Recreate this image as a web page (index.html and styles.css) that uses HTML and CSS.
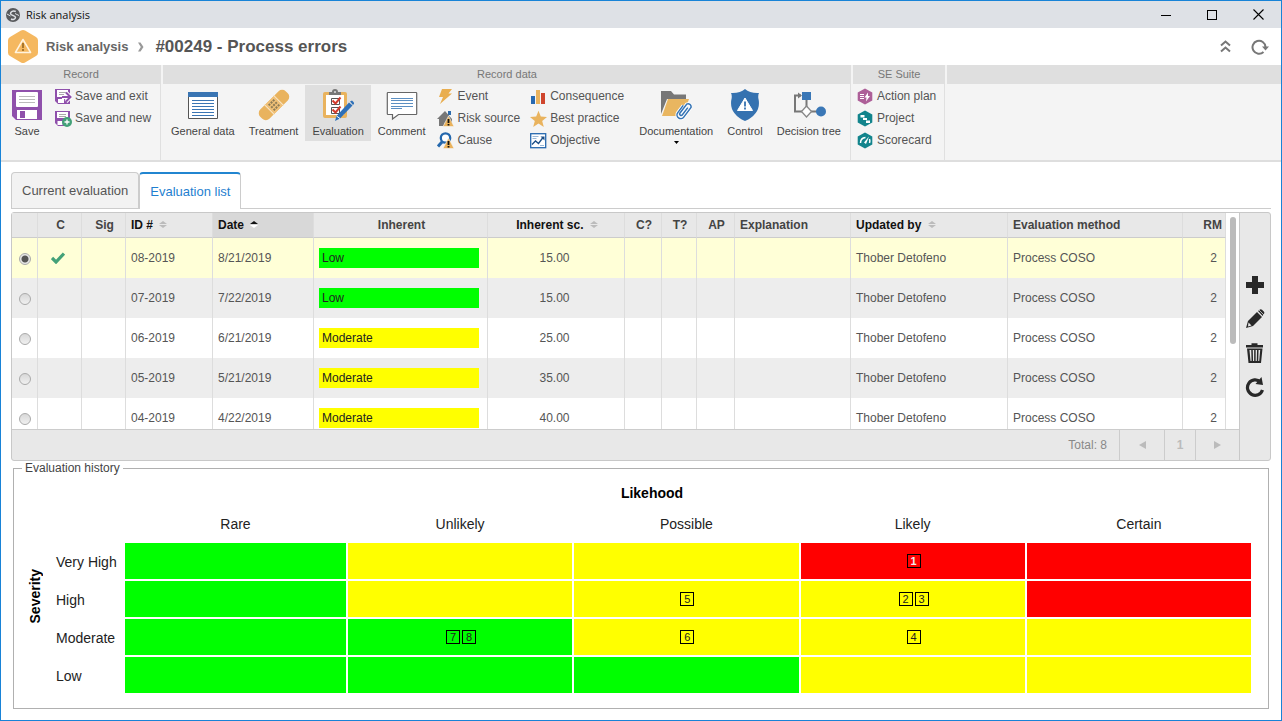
FILE: index.html
```html
<!DOCTYPE html>
<html lang="en">
<head>
<meta charset="utf-8">
<title>Risk analysis</title>
<link rel="stylesheet" href="styles.css">
</head>
<body>
<div class="window">
  <header class="titlebar">
    <svg class="app-icon" width="14" height="14" viewBox="0 0 14 14"><circle cx="7" cy="7" r="7" fill="#57595c"/><path d="M9.800 3.500C7 2 4.500 4 4.500 5.500 4.500 8 9.500 7 9.500 9.500 9.300 11 7 12 5 11" fill="none" stroke="#dee1e6" stroke-width="1.500"/><path d="M1 6l3.500 2M9 5.500l4 2" stroke="#dee1e6" stroke-width="1"/></svg>
    <span class="titlebar-text">Risk analysis</span>
    <button class="win-btn" type="button" aria-label="Minimize"><svg width="10" height="11"><path d="M0 6.500h10" stroke="#000"/></svg></button>
    <button class="win-btn" type="button" aria-label="Maximize"><svg width="10" height="10"><rect x=".5" y=".5" width="9" height="9" fill="none" stroke="#000"/></svg></button>
    <button class="win-btn" type="button" aria-label="Close"><svg width="11" height="11"><path d="M.5.5l10 10M10.500.5l-10 10" stroke="#000" stroke-width="1.100"/></svg></button>
  </header>

  <div class="heading">
    <svg width="30" height="33" viewBox="0 0 30 33"><path d="M13 .6q2-1.100 4 0l11 6.300q2 1.200 2 3.400v12.400q0 2.200-2 3.400l-11 6.300q-2 1.100-4 0l-11-6.300q-2-1.200-2-3.400V10.300q0-2.200 2-3.400z" fill="#f5b860"/><path d="M15 9.500l7.600 13H7.400z" fill="none" stroke="#fff3df" stroke-width="1.500" stroke-linejoin="round"/><path d="M15 13v5M15 19v2" stroke="#a8762c" stroke-width="2"/></svg>
    <a class="crumb" href="#">Risk analysis</a>
    <svg class="crumb-sep" width="6" height="10" viewBox="0 0 6 10"><path d="M0 .5h2.500l3 4.500-3 4.500H0L2.800 5z" fill="#999"/></svg>
    <h1 class="record-title">#00249 - Process errors</h1>
    <button class="icon-btn collapse" type="button" aria-label="Collapse"><svg width="11" height="13" viewBox="0 0 11 13"><path d="M1 5.500l4.500-4 4.500 4M1 11.500l4.500-4 4.500 4" fill="none" stroke="#777" stroke-width="2"/></svg></button>
    <button class="icon-btn" type="button" aria-label="Refresh"><svg width="18" height="16" viewBox="0 0 18 16"><path d="M12.500 13A6.500 6.500 0 1 1 14.500 8" fill="none" stroke="#777" stroke-width="2"/><path d="M11 7.500h7l-3.500 4z" fill="#777"/></svg></button>
  </div>

  <nav class="ribbon">
    <section class="group">
      <h2 class="group-title">Record</h2>
      <div class="group-body group-record">
        <button class="big" type="button">
          <svg width="32" height="32" viewBox="0 0 32 32"><path d="M1 1h30v30H5l-4-4z" fill="#8f50ab"/><rect x="5" y="3" width="22" height="15" rx="1" fill="#fff"/><path d="M8 7.500h16M8 10.500h16M8 13.500h16" stroke="#bbb"/><rect x="6" y="21" width="20" height="9" fill="#fff"/><rect x="9" y="22" width="5" height="7" fill="#8f50ab"/></svg>
          Save</button>
        <div class="stack">
          <button class="small" type="button"><svg width="17" height="17" viewBox="0 0 17 17"><path d="M0 1h15v15H3l-3-3z" fill="#8f50ab"/><rect x="2" y="2" width="11" height="7" fill="#fff"/><path d="M4 4.500h7M4 6.500h5" stroke="#aaa"/><path d="M3 11h6v4H3z" fill="#fff"/><path d="M7 9h8M11 4.500L15.500 9 11 13.500" fill="none" stroke="#fff" stroke-width="4"/><path d="M7 9h8M11 4.500L15.500 9 11 13.500" fill="none" stroke="#8f50ab" stroke-width="2"/></svg>Save and exit</button>
          <button class="small" type="button"><svg width="17" height="17" viewBox="0 0 17 17"><path d="M0 1h15v15H3l-3-3z" fill="#8f50ab"/><rect x="2" y="2" width="11" height="6" fill="#fff"/><path d="M4 4.500h7M4 6.500h7" stroke="#aaa"/><path d="M2.500 11h5v4h-5z" fill="#fff"/><circle cx="12" cy="12" r="5" fill="#43a178"/><path d="M12 9.500v5M9.500 12h5" stroke="#fff" stroke-width="1.300"/></svg>Save and new</button>
        </div>
      </div>
    </section>

    <section class="group">
      <h2 class="group-title">Record data</h2>
      <div class="group-body group-data">
        <button class="big" type="button">
          <svg width="32" height="32" viewBox="0 0 32 32"><path d="M1.500 3.500h29v26h-29z" fill="#fff" stroke="#555"/><path d="M1 3h30v5H1z" fill="#3a75b3"/><path d="M5 11.500h22M5 14.500h22M5 17.500h22M5 20.500h22M5 23.500h22M5 26.500h22" stroke="#3a75b3" stroke-width="1.200"/></svg>
          General data</button>
        <button class="big" type="button">
          <svg width="32" height="32" viewBox="0 0 32 32"><g transform="rotate(-45 16 16)"><rect x="-2" y="9.500" width="36" height="13" rx="5" fill="#e9b35e"/><rect x="10" y="9.500" width="12" height="13" fill="#f0c077"/><path d="M9.500 9v14M22.500 9v14" stroke="#f8e6c8"/><path d="M12 12.500h8M12 16h8M12 19.500h8" stroke="#8f7c55" stroke-width="2" stroke-dasharray="2 1"/></g></svg>
          Treatment</button>
        <button class="big active" type="button">
          <svg width="32" height="32" viewBox="0 0 32 32"><rect x="1" y="3" width="24" height="26" rx="2" fill="#e9b35e"/><path d="M4 6h18v20H4z" fill="#fff"/><path d="M7 6V3h3q0-3 3-3t3 3h3v3z" fill="#777"/><circle cx="13" cy="3" r="1" fill="#ddd"/><path d="M9.500 9.500h8v6h-8zM9.500 18.500h8v6h-8z" fill="#fff" stroke="#555"/><path d="M10.500 11.500l3 3 5-6M10.500 20.500l3 3 5-6" fill="none" stroke="#d33a2c" stroke-width="2"/><path d="M14.500 27L27 13.500l3.500 3L18 29.500l-5 2.500z" fill="#2e70b8"/><path d="M28 12.500l2-1 2.500 2.500-1.500 2z" fill="#2e70b8"/><path d="M14.500 27l3.500 2.500" stroke="#fff"/></svg>
          Evaluation</button>
        <button class="big" type="button">
          <svg width="32" height="32" viewBox="0 0 32 32"><path d="M2 3.500h28q.7 0 .7.700v20.600q0 .7-.7.700H12.500l-6 4.500v-4.500H2q-.7 0-.7-.7V4.200q0-.7.700-.7z" fill="#fff" stroke="#666" stroke-width="1.200"/><path d="M5 9.500h22M5 11.500h22M5 14.500h22M5 17.500h22M5 19.500h11" stroke="#5b8fc2"/></svg>
          Comment</button>
        <div class="stack stack-a">
          <button class="small" type="button"><svg width="17" height="17" viewBox="0 0 17 17"><path d="M5 1h10l-3.500 4.500H15L3 16l3-7H2z" fill="#e9ae50"/></svg>Event</button>
          <button class="small" type="button"><svg width="17" height="17" viewBox="0 0 17 17"><path d="M11 1h3v4h-3z" fill="#2d6cad"/><path d="M8 1l7 8v6H8v-3l-1 4H2V9H0z" fill="#777"/><path d="M11.500 6l5.500 10.500H6z" fill="#eab25b" stroke="#f4f4f4" stroke-width=".6"/><path d="M11.500 9v4M11.500 14v1.500" stroke="#111" stroke-width="1.800"/></svg>Risk source</button>
          <button class="small" type="button"><svg width="17" height="17" viewBox="0 0 17 17"><circle cx="8.500" cy="6" r="4.700" fill="#fff" stroke="#2568ad" stroke-width="2.300"/><path d="M5 10l-4 4.500" stroke="#2568ad" stroke-width="3"/><path d="M11.500 6l5.500 10.500H6z" fill="#eab25b" stroke="#f4f4f4" stroke-width=".6"/><path d="M11.500 9v4M11.500 14v1.500" stroke="#111" stroke-width="1.800"/></svg>Cause</button>
        </div>
        <div class="stack stack-b">
          <button class="small" type="button"><svg width="17" height="17" viewBox="0 0 17 17"><path d="M1 8h4v8H1z" fill="#2869b0"/><path d="M6 2h4v14H6z" fill="#e9b35e"/><path d="M11 5h4v11h-4z" fill="#cf452d"/></svg>Consequence</button>
          <button class="small" type="button"><svg width="17" height="17" viewBox="0 0 17 17"><path d="M8.500.8l2.300 5.700 6.200.4-4.800 4 1.600 6-5.300-3.400L3.200 16.900l1.600-6L0 6.900l6.200-.4z" fill="#e9b35e"/></svg>Best practice</button>
          <button class="small" type="button"><svg width="17" height="17" viewBox="0 0 17 17"><rect x=".7" y="1.700" width="15" height="14" fill="#fff" stroke="#2668ae" stroke-width="1.300"/><path d="M2.500 4.500h6M2.500 6.500h4M10 13.500h4" stroke="#9bb8d6"/><path d="M2 12.500l3.500-3.500 3 2.500 4.500-6" fill="none" stroke="#1c4e86" stroke-width="1.300"/><path d="M10.500 4.500h4v4z" fill="#1c4e86"/></svg>Objective</button>
        </div>
        <button class="big" type="button">
          <svg width="32" height="32" viewBox="0 0 32 32"><path d="M1 2h10l3 3.500h12V10H7L1 25z" fill="#777"/><path d="M8 10h21l-6 17H2z" fill="#e9b660"/><g transform="rotate(37 24 22)" fill="none"><path d="M20 18v9a3.500 3.500 0 0 0 7.500 0V15a3 3 0 0 0-5.500 0v11a1.300 1.300 0 0 0 3 0v-9" stroke="#fff" stroke-width="3.200"/><path d="M20 18v9a3.500 3.500 0 0 0 7.500 0V15a3 3 0 0 0-5.500 0v11a1.300 1.300 0 0 0 3 0v-9" stroke="#3574b5" stroke-width="1.500"/></g></svg>
          Documentation
          <svg class="caret" width="5" height="3"><path d="M0 0h5L2.500 3z" fill="#000"/></svg></button>
        <button class="big" type="button">
          <svg width="32" height="32" viewBox="0 0 32 32"><path d="M16 0q5 4.500 14 4-1 1.500-.7 5Q33 24 16 32-1 24 2.700 9 3 5.500 2 4q9 .5 14-4z" fill="#3572b0"/><path d="M16 9l7.500 12.500h-15z" fill="#fff" stroke="#fff" stroke-linejoin="round"/><path d="M16 12.500v5M16 18.500v2" stroke="#3572b0" stroke-width="1.800"/></svg>
          Control</button>
        <button class="big" type="button">
          <svg width="34" height="32" viewBox="0 0 34 32"><path d="M9 6.500H3v16h9M14.500 7v13M17 22.500h8" fill="none" stroke="#777" stroke-width="2"/><path d="M6 3.500l4 3-4 3z" fill="#777"/><path d="M10 3h9v8h-9z" fill="#3a77b6"/><path d="M14.500 17l5 5.500-5 5.500-5-5.500z" fill="#fff" stroke="#888" stroke-width="1.300"/><circle cx="29" cy="22.500" r="5" fill="#3a77b6"/></svg>
          Decision tree</button>
      </div>
    </section>

    <section class="group">
      <h2 class="group-title">SE Suite</h2>
      <div class="group-body group-suite">
        <div class="stack">
          <button class="small" type="button"><svg width="17" height="17" viewBox="0 0 17 17"><path d="M8 .5l7.300 4v8L8 16.500.7 12.500v-8z" fill="#ad5f98"/><path d="M3 6.500h4M3 8.500h4M3 10.500h4" stroke="#fff"/><path d="M11 4.500l-3.500 5h2l-.5 4 4-5.500h-2z" fill="#fff"/></svg>Action plan</button>
          <button class="small" type="button"><svg width="17" height="17" viewBox="0 0 17 17"><path d="M8 .5l7.300 4v8L8 16.500.7 12.500v-8z" fill="#12848c"/><path d="M3.500 5h4v2.500h-4zM6 8h4v2h-4zM9 10.500h4v2.500H9z" fill="#fff"/></svg>Project</button>
          <button class="small" type="button"><svg width="17" height="17" viewBox="0 0 17 17"><path d="M8 .5l7.300 4v8L8 16.500.7 12.500v-8z" fill="#12848c"/><path d="M3.500 11q0-5 5-5.500M12.500 7q.8 2 0 4" fill="none" stroke="#fff" stroke-width="1.500"/><path d="M12 4.500l-3 7.500-2-1.500z" fill="#fff"/></svg>Scorecard</button>
        </div>
      </div>
    </section>
    <section class="group group-rest"><div class="group-title"></div></section>
  </nav>

  <main class="content">
    <div class="tabs" role="tablist">
      <button class="tab" type="button" role="tab" aria-selected="false">Current evaluation</button>
      <button class="tab selected" type="button" role="tab" aria-selected="true">Evaluation list</button>
    </div>

    <div class="panel">
      <div class="panel-main">
        <div class="list">
          <div class="list-scroll">
            <table class="grid">
              <colgroup>
                <col class="w-radio"><col class="w-flag"><col class="w-flag"><col class="w-id"><col class="w-date"><col class="w-inh"><col class="w-score"><col class="w-c"><col class="w-t"><col class="w-ap"><col><col class="w-user"><col class="w-method"><col class="w-rm">
              </colgroup>
              <thead>
                <tr>
                  <th></th><th class="mid">C</th><th class="mid">Sig</th>
                  <th class="sortable">ID # <svg class="sort" width="8" height="7"><path d="M0 3l4-3 4 3zM0 4l4 3 4-3z" fill="#bbb"/></svg></th>
                  <th class="sortable sorted">Date <svg class="sort" width="8" height="7"><path d="M0 3l4-3 4 3z" fill="#111"/><path d="M0 4l4 3 4-3z" fill="#fff"/></svg></th>
                  <th class="mid">Inherent</th>
                  <th class="mid sortable">Inherent sc. <svg class="sort" width="8" height="7"><path d="M0 3l4-3 4 3zM0 4l4 3 4-3z" fill="#bbb"/></svg></th>
                  <th class="mid">C?</th><th class="mid">T?</th><th class="mid">AP</th><th>Explanation</th>
                  <th class="sortable">Updated by <svg class="sort" width="8" height="7"><path d="M0 3l4-3 4 3zM0 4l4 3 4-3z" fill="#bbb"/></svg></th>
                  <th>Evaluation method</th><th class="rm">RM</th>
                </tr>
              </thead>
              <tbody>
                <tr class="chosen"><td class="pick"><input type="radio" name="row" aria-label="08-2019" checked></td><td class="tick"><svg class="check" width="14" height="12" viewBox="0 0 14 12"><path d="M1 6l4 4 8-8.500" fill="none" stroke="#43a178" stroke-width="3.200"/></svg></td><td></td><td>08-2019</td><td>8/21/2019</td><td><span class="level low">Low</span></td><td class="score">15.00</td><td></td><td></td><td></td><td></td><td>Thober Detofeno</td><td>Process COSO</td><td class="num">2</td></tr>
                <tr><td class="pick"><input type="radio" name="row" aria-label="07-2019"></td><td></td><td></td><td>07-2019</td><td>7/22/2019</td><td><span class="level low">Low</span></td><td class="score">15.00</td><td></td><td></td><td></td><td></td><td>Thober Detofeno</td><td>Process COSO</td><td class="num">2</td></tr>
                <tr><td class="pick"><input type="radio" name="row" aria-label="06-2019"></td><td></td><td></td><td>06-2019</td><td>6/21/2019</td><td><span class="level moderate">Moderate</span></td><td class="score">25.00</td><td></td><td></td><td></td><td></td><td>Thober Detofeno</td><td>Process COSO</td><td class="num">2</td></tr>
                <tr><td class="pick"><input type="radio" name="row" aria-label="05-2019"></td><td></td><td></td><td>05-2019</td><td>5/21/2019</td><td><span class="level moderate">Moderate</span></td><td class="score">35.00</td><td></td><td></td><td></td><td></td><td>Thober Detofeno</td><td>Process COSO</td><td class="num">2</td></tr>
                <tr><td class="pick"><input type="radio" name="row" aria-label="04-2019"></td><td></td><td></td><td>04-2019</td><td>4/22/2019</td><td><span class="level moderate">Moderate</span></td><td class="score">40.00</td><td></td><td></td><td></td><td></td><td>Thober Detofeno</td><td>Process COSO</td><td class="num">2</td></tr>
              </tbody>
            </table>
          </div>
          <div class="track"><div class="thumb"></div></div>
        </div>
        <footer class="pager">
          <span class="total">Total: 8</span>
          <button class="page-btn prev" type="button" aria-label="Previous page"><svg width="7" height="8"><path d="M7 0v8L0 4z" fill="#bbb"/></svg></button>
          <button class="page-btn" type="button">1</button>
          <button class="page-btn next" type="button" aria-label="Next page"><svg width="7" height="8"><path d="M0 0v8l7-4z" fill="#bbb"/></svg></button>
        </footer>
      </div>
      <div class="tools">
        <button class="icon-btn" type="button" aria-label="Add"><svg width="20" height="20" viewBox="0 0 20 20"><path d="M7 1h6v6h6v6h-6v6H7v-6H1V7h6z" fill="#282828"/></svg></button>
        <button class="icon-btn" type="button" aria-label="Edit"><svg width="20" height="20" viewBox="0 0 20 20"><path d="M1 19l2-7L12 3l5 5-9 9z" fill="#282828"/><path d="M13 2l2-1.500q1-.5 2 .3l2 2q.8 1 0 2L17.500 7z" fill="#282828"/><path d="M12.300 2.200l5.500 5.500M14 1l5 5" stroke="#e8e8e8" stroke-width=".7"/><path d="M3.500 13.500l3 3-3.500 1z" fill="#e8e8e8"/></svg></button>
        <button class="icon-btn" type="button" aria-label="Delete"><svg width="20" height="20" viewBox="0 0 20 20"><path d="M1 2h5.500V.3h6V2H18v2.500H1zM2 5.500h15.500L16 20H3.500z" fill="#282828"/><path d="M4.500 7h10.700L14.200 18H5.500z" fill="#e8e8e8"/><path d="M7 7l.3 11M9.900 7v11M12.800 7l-.3 11" stroke="#282828" stroke-width="1.500"/></svg></button>
        <button class="icon-btn" type="button" aria-label="Reload"><svg width="20" height="20" viewBox="0 0 20 20"><path d="M15.500 5A7.700 7.700 0 1 0 17.500 13" fill="none" stroke="#282828" stroke-width="3.200"/><path d="M16.500 0L18 8l-7.500-1z" fill="#282828"/></svg></button>
      </div>
    </div>

    <fieldset class="history">
      <legend>Evaluation history</legend>
      <table class="matrix">
        <colgroup><col class="m-axis"><col class="m-label"><col class="m-first"><col><col><col><col></colgroup>
        <tr class="m-title"><td></td><th colspan="6">Likehood</th></tr>
        <tr class="m-head"><th class="axis" rowspan="5"><span>Severity</span></th><td></td><th>Rare</th><th>Unlikely</th><th>Possible</th><th>Likely</th><th>Certain</th></tr>
        <tr class="m-row"><th>Very High</th><td class="low"></td><td class="moderate"></td><td class="moderate"></td><td class="high"><span class="mark light">1</span></td><td class="high"></td></tr>
        <tr class="m-row"><th>High</th><td class="low"></td><td class="moderate"></td><td class="moderate"><span class="mark">5</span></td><td class="moderate"><span class="mark">2</span><span class="mark">3</span></td><td class="high"></td></tr>
        <tr class="m-row"><th>Moderate</th><td class="low"></td><td class="low"><span class="mark">7</span><span class="mark">8</span></td><td class="moderate"><span class="mark">6</span></td><td class="moderate"><span class="mark">4</span></td><td class="moderate"></td></tr>
        <tr class="m-row"><th>Low</th><td class="low"></td><td class="low"></td><td class="low"></td><td class="moderate"></td><td class="moderate"></td></tr>
      </table>
    </fieldset>
  </main>
</div>
</body>
</html>
```

FILE: styles.css
```css
* { box-sizing: border-box; }

body {
  margin: 0;
  font-family: "Liberation Sans", Arial, sans-serif;
  font-size: 12px;
  color: #555;
  background: #fff;
}

button {
  margin: 0;
  padding: 0;
  border: 0;
  background: none;
  font: inherit;
  color: inherit;
}

svg { display: block; flex: none; }

.window {
  min-height: 100vh;
  border: 1px solid #1883d7;
}

/* Title bar */
.titlebar {
  display: flex;
  align-items: center;
  height: 27px;
  padding-left: 5px;
  background: #dee1e6;
}
.titlebar-text {
  flex: 1;
  padding-left: 6px;
  font-family: "Open Sans", "Noto Sans", sans-serif;
  font-size: 11px;
  color: #111;
}
.win-btn {
  display: flex;
  align-items: center;
  justify-content: center;
  width: 46px;
  height: 27px;
}

/* Heading */
.heading {
  display: flex;
  align-items: center;
  height: 37px;
  padding: 0 12px 0 7px;
}
.crumb {
  margin-left: 8px;
  font-size: 13px;
  font-weight: bold;
  color: #666;
  text-decoration: none;
}
.crumb-sep { margin: 0 11px 0 10px; }
.record-title {
  flex: 1;
  margin: 0;
  font-size: 17px;
  line-height: 20px;
  color: #555;
}
.icon-btn {
  display: flex;
  align-items: center;
  justify-content: center;
}
.collapse { margin-right: 20px; }

/* Ribbon */
.ribbon {
  display: flex;
  gap: 2px;
  background: #f4f4f4;
  border-bottom: 2px solid #dedede;
}
.group { display: flex; flex-direction: column; }
.group-rest { flex: 1; }
.group-title {
  height: 19px;
  margin: 0;
  font-size: 11px;
  font-weight: normal;
  line-height: 19px;
  text-align: center;
  color: #777;
  background: #dfdfdf;
}
.group-body {
  display: flex;
  align-items: flex-start;
  height: 76px;
  padding-top: 1px;
  border-right: 1px solid #e0e0e0;
}
.group-record { padding-left: 3px; padding-right: 9px; }
.group-data { padding-left: 1px; padding-right: 2px; }
.group-suite { padding-left: 4px; padding-right: 8px; }
.big {
  display: flex;
  flex-direction: column;
  align-items: center;
  gap: 3px;
  min-height: 56px;
  padding: 4px 7px 0;
  font-size: 11px;
  line-height: 14px;
  color: #444;
  white-space: nowrap;
}
.big.active { background: #dfdfdf; }
.group-record .big { padding-right: 12px; }
.stack { display: flex; flex-direction: column; }
.stack-a { padding-left: 5px; }
.stack-b { padding-left: 10px; padding-right: 8px; }
.small {
  display: flex;
  align-items: center;
  gap: 3px;
  height: 22px;
  color: #555;
  white-space: nowrap;
}

/* Tabs */
.content { padding: 10px 10px; }
.tabs {
  display: flex;
  border-bottom: 1px solid #ccc;
}
.tab {
  height: 36px;
  padding: 0 10px;
  border: 1px solid #ccc;
  border-bottom: 0;
  border-radius: 4px 4px 0 0;
  background: #f2f2f2;
  font-size: 13px;
  color: #555;
}
.tab.selected {
  height: 37px;
  margin-bottom: -1px;
  border-top: 2px solid #2185d0;
  background: #fff;
  color: #1f7fd0;
}

/* Evaluation list */
.panel {
  display: flex;
  margin-top: 3px;
  border: 1px solid #c8c8c8;
  border-radius: 3px;
  background: #e8e8e8;
}
.panel-main { flex: 1; min-width: 0; }
.list { display: flex; height: 216px; background: #fff; }
.list-scroll { flex: 1; overflow: hidden; }
.track { width: 13px; padding: 4px 3px 0 4px; }
.thumb { height: 127px; border-radius: 3px; background: #bbb; }

.grid {
  width: 100%;
  table-layout: fixed;
  border-collapse: separate;
  border-spacing: 0;
}
.w-radio { width: 26px; }
.w-flag { width: 44px; }
.w-id { width: 87px; }
.w-date { width: 101px; }
.w-inh { width: 174px; }
.w-score { width: 137px; }
.w-c { width: 37px; }
.w-t { width: 35px; }
.w-ap { width: 38px; }
.w-user { width: 157px; }
.w-method { width: 175px; }
.w-rm { width: 43px; }
.grid th {
  height: 25px;
  padding: 0 0 1px 5px;
  border-right: 1px solid #ddd;
  border-bottom: 1px solid #ccc;
  background: #e8e8e8;
  color: #444;
  text-align: left;
  white-space: nowrap;
}
.grid td {
  height: 40px;
  padding: 0 0 0 5px;
  border-right: 1px solid #ddd;
  white-space: nowrap;
}
.grid tbody tr:nth-child(even) { background: #ededed; }
.grid tbody tr.chosen { background: #ffffd7; }
.grid .mid { padding-left: 2px; text-align: center; }
.grid .score { padding: 0 3px 0 0; text-align: center; }
.grid .tick { padding: 0 3px 1px 0; text-align: center; }
.grid .sortable { color: #111; }
.grid .sorted { background: #d8d8d8; }
.grid .rm { padding-right: 3px; text-align: right; }
.grid .num { padding-right: 8px; text-align: right; }
.grid .pick { padding: 1px 0 0; text-align: center; }
.sort { display: inline-block; margin-left: 3px; vertical-align: 1px; }
.check { display: inline-block; vertical-align: middle; }
.pick input {
  appearance: none;
  display: block;
  width: 12px;
  height: 12px;
  margin: 0 auto;
  border: 1px solid #aaa;
  border-radius: 50%;
  background: linear-gradient(#d8d8d8, #f0f0f0);
}
.pick input:checked { background: radial-gradient(circle, #555 0 3px, #e8e8e8 4px); }
.level {
  display: block;
  width: 160px;
  height: 20px;
  padding-left: 3px;
  line-height: 20px;
  color: #222;
}
.low { background: #0f0; }
.moderate { background: #ff0; }
.high { background: #f00; }

.pager {
  display: flex;
  align-items: center;
  justify-content: flex-end;
  height: 31px;
  border-top: 1px solid #ccc;
  color: #888;
}
.total { padding-right: 12px; }
.page-btn {
  display: flex;
  align-items: center;
  justify-content: center;
  width: 45px;
  height: 30px;
  border-left: 1px solid #ccc;
  font-weight: bold;
  color: #bbb;
}
.prev + .page-btn { width: 31px; }
.page-btn.next { width: 44px; }
.tools {
  display: flex;
  flex-direction: column;
  align-items: center;
  justify-content: center;
  gap: 14px;
  width: 31px;
  padding-bottom: 2px;
  border-left: 1px solid #c8c8c8;
}

/* Evaluation history */
.history {
  min-width: 0;
  margin: 0 2px;
  padding: 6px 15px 13px 8px;
  border: 1px solid #b0b0b0;
}
.history legend {
  padding: 0 3px;
  line-height: 14px;
  color: #444;
}
.matrix {
  width: 100%;
  table-layout: fixed;
  border-spacing: 2px;
  font-size: 14px;
  line-height: 16px;
  color: #222;
}
.matrix th, .matrix td { padding: 0; }
.m-axis { width: 22px; }
.m-label { width: 75px; }
.m-first { width: 221px; }
.matrix .m-title th { height: 16px; padding: 2px 0 0 5px; color: #000; }
.m-head th, .m-row th { font-weight: normal; }
.matrix .m-head th { height: 38px; padding-top: 4px; }
.matrix .m-row th { padding: 2px 0 0 8px; text-align: left; }
.matrix .m-row td { height: 36px; padding-left: 2px; font-size: 0; text-align: center; }
.matrix .m-head .axis { padding: 0; font-weight: bold; color: #000; }
.axis span {
  display: inline-block;
  writing-mode: vertical-rl;
  transform: rotate(180deg);
}
.mark {
  display: inline-block;
  width: 14px;
  height: 14px;
  margin: 0 1px;
  border: 1px solid #000;
  font-size: 11px;
  line-height: 12px;
  vertical-align: middle;
  color: #222;
}
.mark.light { font-weight: bold; color: #eee; }
```
